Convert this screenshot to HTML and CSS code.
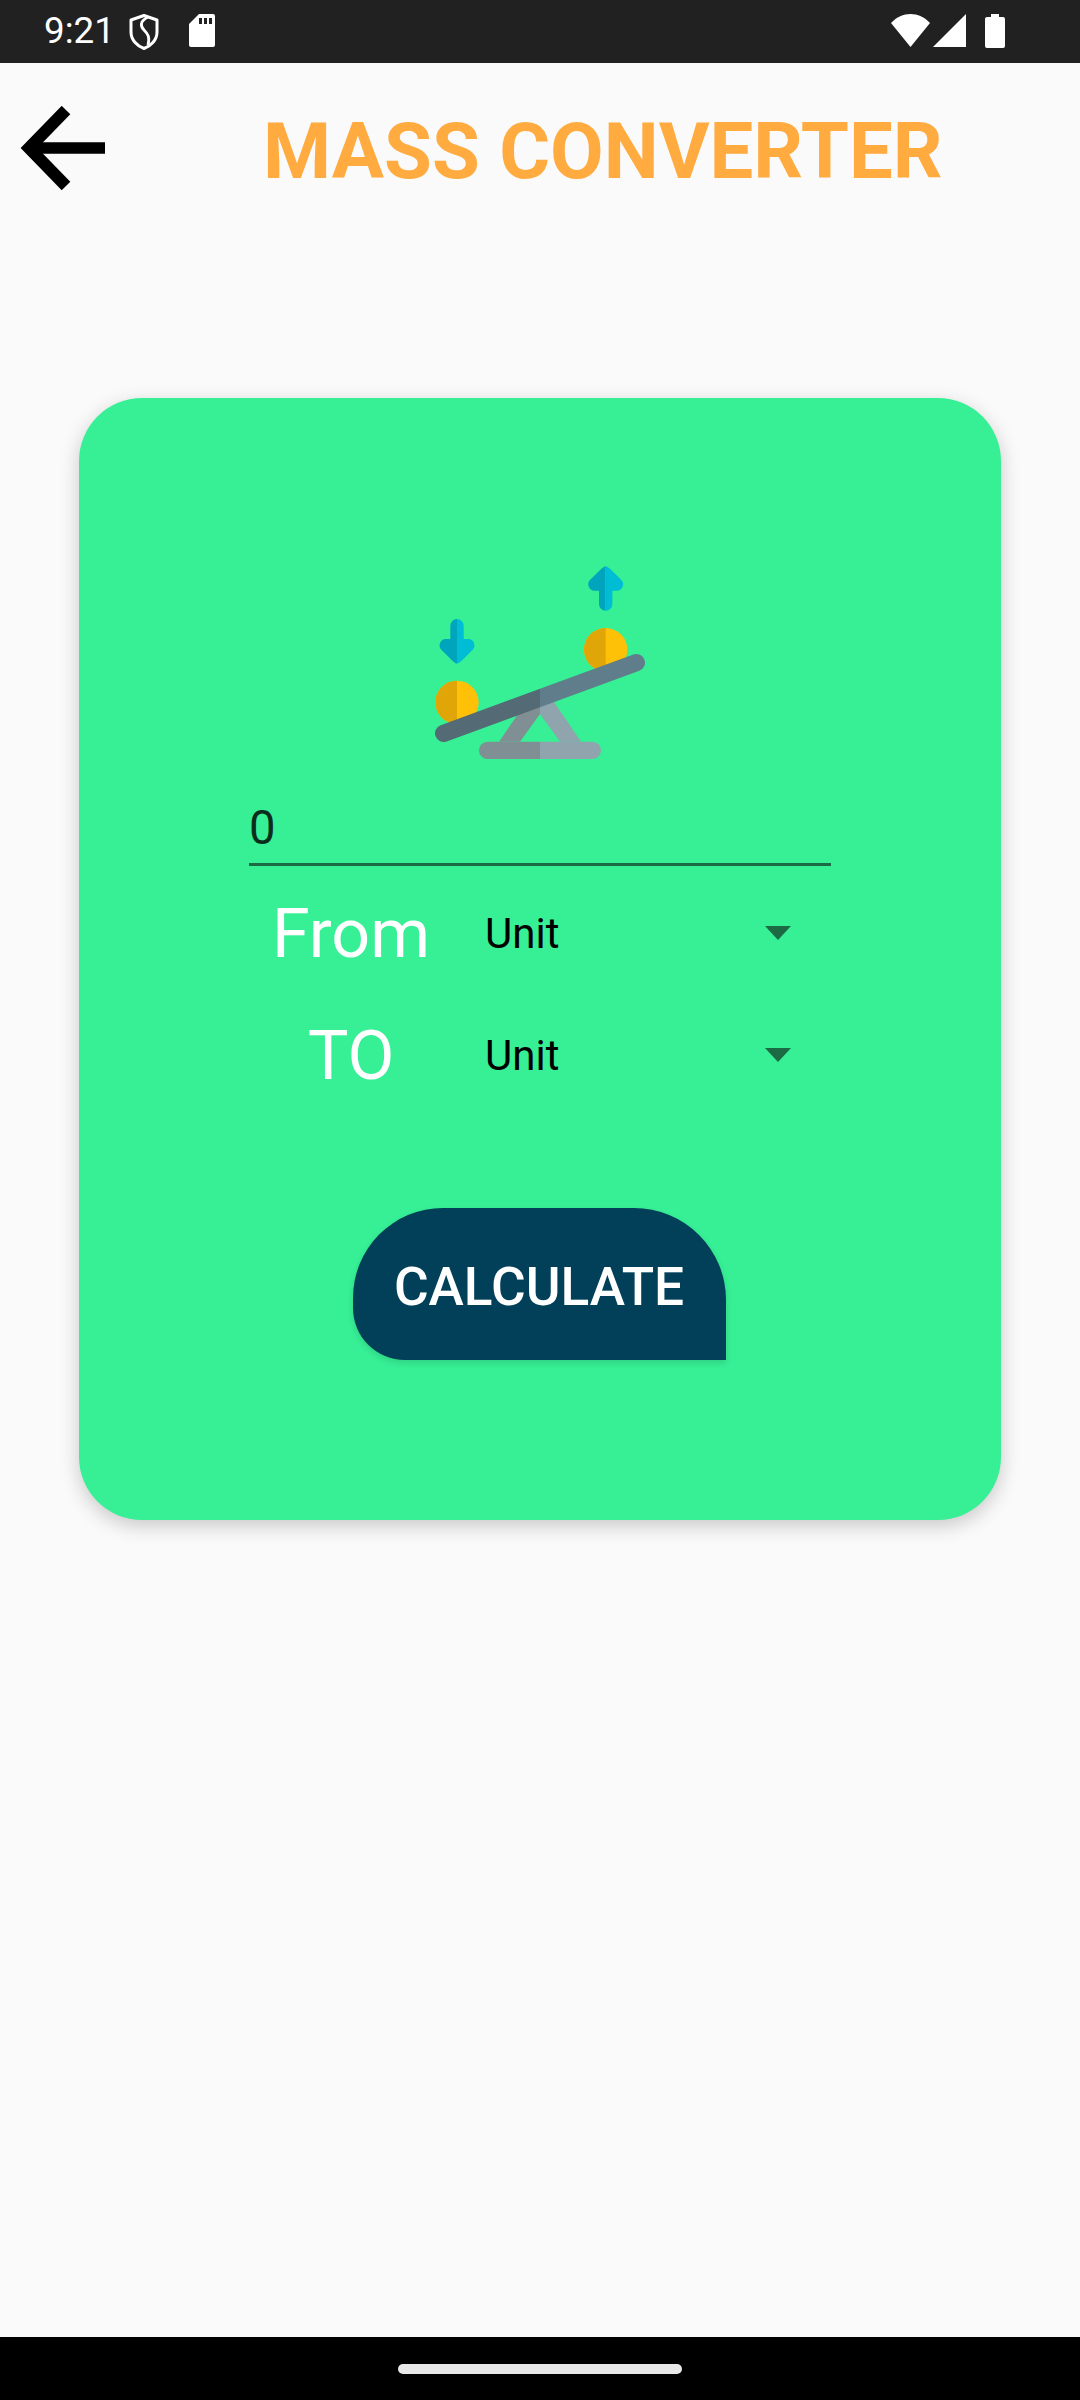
FILE: index.html
```html
<!DOCTYPE html>
<html lang="en">
<head>
<meta charset="utf-8">
<title>Mass Converter</title>
<link rel="stylesheet" href="styles.css">
</head>
<body>
<div class="screen">
  <div class="status-bar">
    <span class="time">9:21</span>
    <svg class="shield" width="30" height="36" viewBox="0 0 30 36"><path d="M15 1.500 L28 6 V18 C28 26 22 32 15 34.500 C8 32 2 26 2 18 V6 Z" fill="none" stroke="#fff" stroke-width="3" stroke-linejoin="round"/><path d="M19 3 C11 7 11 12 15 16 C19 20 21 23 19 31" fill="none" stroke="#fff" stroke-width="2.800"/></svg>
    <svg class="sd" width="26" height="33" viewBox="0 0 26 33"><path d="M10 0 H24 a2 2 0 0 1 2 2 V31 a2 2 0 0 1 -2 2 H2 a2 2 0 0 1 -2 -2 V10 Z" fill="#fff"/><rect x="10" y="4" width="3" height="6" fill="#212121"/><rect x="15" y="4" width="3" height="6" fill="#212121"/><rect x="20" y="4" width="3" height="6" fill="#212121"/></svg>
    <div class="status-right">
      <svg width="39" height="33" viewBox="0 0 39 33"><path d="M0 9 C11 -3 28 -3 39 9 L19.500 33 Z" fill="#fff"/></svg>
      <svg width="33" height="33" viewBox="0 0 33 33"><path d="M33 0 V33 H0 Z" fill="#fff"/></svg>
      <svg class="battery" width="20" height="34" viewBox="0 0 20 34"><path d="M6 0 H14 V3 H18 a2 2 0 0 1 2 2 V32 a2 2 0 0 1 -2 2 H2 a2 2 0 0 1 -2 -2 V5 a2 2 0 0 1 2 -2 H6 Z" fill="#fff"/></svg>
    </div>
  </div>

  <header class="top-bar">
    <svg class="back" width="88" height="90" viewBox="0 0 88 90"><path d="M85 42 H10" fill="none" stroke="#000" stroke-width="11.500"/><path d="M46 4 L9 42 L46 80" fill="none" stroke="#000" stroke-width="12" stroke-linecap="butt" stroke-linejoin="miter"/></svg>
    <h1 class="title">MASS CONVERTER</h1>
  </header>

  <main class="content">
    <section class="card">
      <svg class="seesaw" width="280" height="240" viewBox="0 0 840 720">
        <defs>
          <clipPath id="left-half"><rect x="0" y="0" width="420" height="720"/></clipPath>
          <clipPath id="right-half"><rect x="420" y="0" width="420" height="720"/></clipPath>
        </defs>
        <circle cx="171" cy="487" r="65" fill="#FFC107"/>
        <path d="M171 422 a65 65 0 0 0 0 130 Z" fill="#E0A608"/>
        <circle cx="617" cy="329" r="65" fill="#FFC107"/>
        <path d="M617 264 a65 65 0 0 0 0 130 Z" fill="#E0A608"/>
        <g>
          <path d="M171 237 a20 20 0 0 0 -20 20 V297 H137 a19 19 0 0 0 -13 32 L158 363 q13 11 13 6 Z" fill="#00A5BD"/>
          <path d="M171 237 a20 20 0 0 1 20 20 V297 H205 a19 19 0 0 1 13 32 L184 363 q-13 11 -13 6 Z" fill="#00BCD4"/>
        </g>
        <g transform="translate(446 449) scale(1 -1)">
          <path d="M171 237 a20 20 0 0 0 -20 20 V297 H137 a19 19 0 0 0 -13 32 L158 363 q13 11 13 6 Z" fill="#00A5BD"/>
          <path d="M171 237 a20 20 0 0 1 20 20 V297 H205 a19 19 0 0 1 13 32 L184 363 q-13 11 -13 6 Z" fill="#00BCD4"/>
        </g>
        <path d="M297 605 L366 505 L420 490 V522 L360 605 Z" fill="#7F8F93"/>
        <path d="M420 480 H458 L543 605 H480 L420 522 Z" fill="#90A4AE"/>
        <path d="M263 605 H420 V657 H263 a26 26 0 0 1 0 -52 Z" fill="#7F8F93"/>
        <path d="M577 605 H420 V657 H577 a26 26 0 0 0 0 -52 Z" fill="#90A4AE"/>
        <line x1="131" y1="580" x2="709" y2="368" stroke="#546A75" stroke-width="52" stroke-linecap="round" clip-path="url(#left-half)"/>
        <line x1="131" y1="580" x2="709" y2="368" stroke="#607D8B" stroke-width="52" stroke-linecap="round" clip-path="url(#right-half)"/>
      </svg>

      <div class="value-field"><span>0</span></div>

      <div class="unit-row">
        <span class="unit-label">From</span>
        <div class="unit-select"><span>Unit</span><i class="caret"></i></div>
      </div>
      <div class="unit-row">
        <span class="unit-label">TO</span>
        <div class="unit-select"><span>Unit</span><i class="caret"></i></div>
      </div>

      <button class="calc">CALCULATE</button>
    </section>
  </main>

  <footer class="nav-bar"><div class="pill"></div></footer>
</div>
</body>
</html>
```
FILE: styles.css
```css
* { box-sizing: border-box; }
html, body { margin: 0; padding: 0; }
body { font-family: Roboto, "Liberation Sans", sans-serif; background: #FAFAFA; }

.screen { width: 1080px; height: 2400px; display: flex; flex-direction: column; overflow: hidden; }

.status-bar { height: 63px; flex: none; background: #212121; display: flex; align-items: flex-start; padding: 14px 0 0 44px; color: #fff; }
.time { font-size: 36.75px; line-height: 33px; width: 85px; }
.shield { display: block; margin-right: 30px; }
.status-right { margin-left: auto; display: flex; gap: 3px; padding-right: 75px; }
.status-right svg { display: block; }
.battery { margin-left: 16px; }

.top-bar { height: 172px; flex: none; display: flex; align-items: flex-start; padding: 43px 0 0 20px; }
.back { display: block; flex: none; }
.title { margin: 4px 0 0 155px; font-size: 77.8px; line-height: 84px; font-weight: 700; color: #FFAB40; white-space: nowrap; }

.content { flex: 1; padding: 163px 79px 0; }

.card { height: 1122px; background: #37EF95; border-radius: 63px; box-shadow: 0 6px 20px rgba(0,0,0,.2); display: flex; flex-direction: column; align-items: center; padding-top: 142px; }
.seesaw { display: block; flex: none; }

.value-field { width: 582px; height: 85px; margin: 1px 0 7px; border-bottom: 3px solid #1C6A43; font-size: 47.25px; line-height: 60px; color: #0B2E1C; display: flex; align-items: flex-start; }
.value-field span { padding-top: 17px; }

.unit-row { width: 582px; height: 122px; display: flex; align-items: center; padding: 0 40px 0 15px; }
.unit-label { width: 174px; flex: none; text-align: center; font-size: 68.25px; line-height: 80px; color: #fff; }
.unit-select { flex: 1; display: flex; justify-content: space-between; align-items: center; font-size: 42px; line-height: 50px; color: #000; padding-left: 47px; }
.caret { width: 0; height: 0; margin-top: -2px; border-left: 13px solid transparent; border-right: 13px solid transparent; border-top: 14px solid #1C6A43; }

.calc { margin: 91px 2px 0 0; width: 373px; height: 152px; border: 0; background: #02405A; color: #fff; font: 500 53.2px/60px Roboto, "Liberation Sans", sans-serif; border-radius: 90px 92px 0 52px; padding: 6px 0 0; display: block; box-shadow: 0 3px 6px rgba(0,0,0,.12); }

.nav-bar { height: 63px; flex: none; background: #000; display: flex; justify-content: center; padding-top: 27px; }
.pill { width: 284px; height: 10px; border-radius: 5px; background: #E8E8E8; }
```
